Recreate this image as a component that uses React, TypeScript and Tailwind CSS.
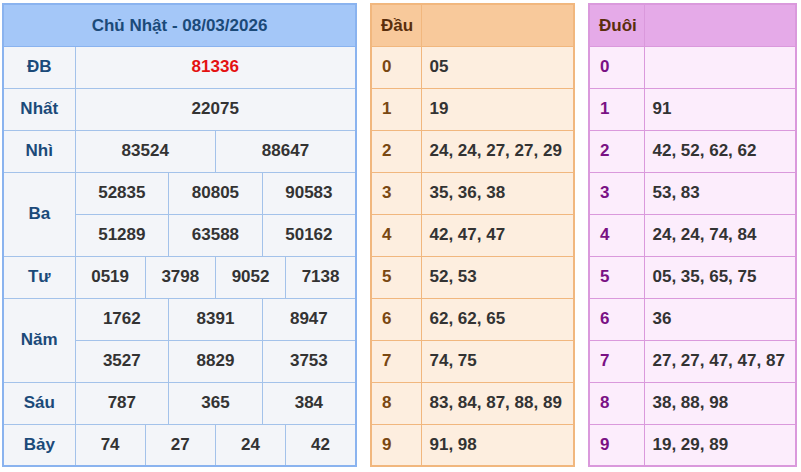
import React from "react";

const font = { fontFamily: '"Liberation Sans", Arial, sans-serif' };

type Cell = { v: string; span: number; red?: boolean };
type Row = { label?: string; rowSpan?: number; cells: Cell[] };

const s = (vals: string[], span: number): Cell[] => vals.map((v) => ({ v, span }));

const rows: Row[] = [
  { label: "ĐB", cells: [{ v: "81336", span: 12, red: true }] },
  { label: "Nhất", cells: s(["22075"], 12) },
  { label: "Nhì", cells: s(["83524", "88647"], 6) },
  { label: "Ba", rowSpan: 2, cells: s(["52835", "80805", "90583"], 4) },
  { cells: s(["51289", "63588", "50162"], 4) },
  { label: "Tư", cells: s(["0519", "3798", "9052", "7138"], 3) },
  { label: "Năm", rowSpan: 2, cells: s(["1762", "8391", "8947"], 4) },
  { cells: s(["3527", "8829", "3753"], 4) },
  { label: "Sáu", cells: s(["787", "365", "384"], 4) },
  { label: "Bảy", cells: s(["74", "27", "24", "42"], 3) },
];

const dau = ["05", "19", "24, 24, 27, 27, 29", "35, 36, 38", "42, 47, 47", "52, 53", "62, 62, 65", "74, 75", "83, 84, 87, 88, 89", "91, 98"];
const duoi = ["", "91", "42, 52, 62, 62", "53, 83", "24, 24, 74, 84", "05, 35, 65, 75", "36", "27, 27, 47, 47, 87", "38, 88, 98", "19, 29, 89"];

function Main() {
  return (
    <table className="w-[355px] table-fixed border-collapse border-2 border-[#8ab3ef] text-[17px] font-bold whitespace-nowrap">
      <colgroup>
        <col className="w-[72px]" />
        {Array.from({ length: 12 }).map((_, i) => (
          <col key={i} />
        ))}
      </colgroup>
      <tbody>
        <tr className="h-[42px] bg-[#a4c7f8]">
          <td colSpan={13} className="border border-[#8ab3ef] text-center text-[#1b4a79]">
            Chủ Nhật - 08/03/2026
          </td>
        </tr>
        {rows.map((r, i) => (
          <tr key={i} className="h-[42px] bg-[#f3f5f9]">
            {r.label && (
              <td rowSpan={r.rowSpan} className="border border-[#a3c2ea] text-center text-[#1b4a79]">
                {r.label}
              </td>
            )}
            {r.cells.map((c, j) => (
              <td
                key={j}
                colSpan={c.span}
                className={`border border-[#a3c2ea] text-center ${c.red ? "text-[#e41111]" : "text-[#333333]"}`}
              >
                {c.v}
              </td>
            ))}
          </tr>
        ))}
      </tbody>
    </table>
  );
}

function Side({
  title,
  data,
  kind,
}: {
  title: string;
  data: string[];
  kind: "dau" | "duoi";
}) {
  const isDau = kind === "dau";
  return (
    <table
      className={`table-fixed border-collapse border-2 text-[17px] font-bold whitespace-nowrap ${
        isDau ? "w-[205px] border-[#f1b77e]" : "w-[209px] border-[#da99dc]"
      }`}
    >
      <colgroup>
        <col className={isDau ? "w-[50px]" : "w-[55px]"} />
        <col />
      </colgroup>
      <tbody>
        <tr className={`h-[42px] ${isDau ? "bg-[#f8c99b]" : "bg-[#e5aae8]"}`}>
          <td className={`border px-[9px] text-[#5a2e0c] ${isDau ? "border-[#f1b77e]" : "border-[#da99dc]"}`}>{title}</td>
          <td className={`border ${isDau ? "border-[#f1b77e]" : "border-[#da99dc]"}`}></td>
        </tr>
        {data.map((d, i) => (
          <tr key={i} className={`h-[42px] ${isDau ? "bg-[#fdeedf]" : "bg-[#fcedfc]"}`}>
            <td
              className={`border px-[10px] ${
                isDau ? "border-[#f1b77e] text-[#7a4812]" : "border-[#da99dc] text-[#7a1184]"
              }`}
            >
              {i}
            </td>
            <td className={`border px-[8px] text-[#333333] ${isDau ? "border-[#f1b77e]" : "border-[#da99dc]"}`}>{d}</td>
          </tr>
        ))}
      </tbody>
    </table>
  );
}

export default function App() {
  return (
    <div className="w-[801px] h-[472px] bg-white" style={font}>
      <div className="flex items-start gap-[13px] pl-[2px] pt-[3px]">
        <Main />
        <Side title="Đầu" data={dau} kind="dau" />
        <Side title="Đuôi" data={duoi} kind="duoi" />
      </div>
    </div>
  );
}
